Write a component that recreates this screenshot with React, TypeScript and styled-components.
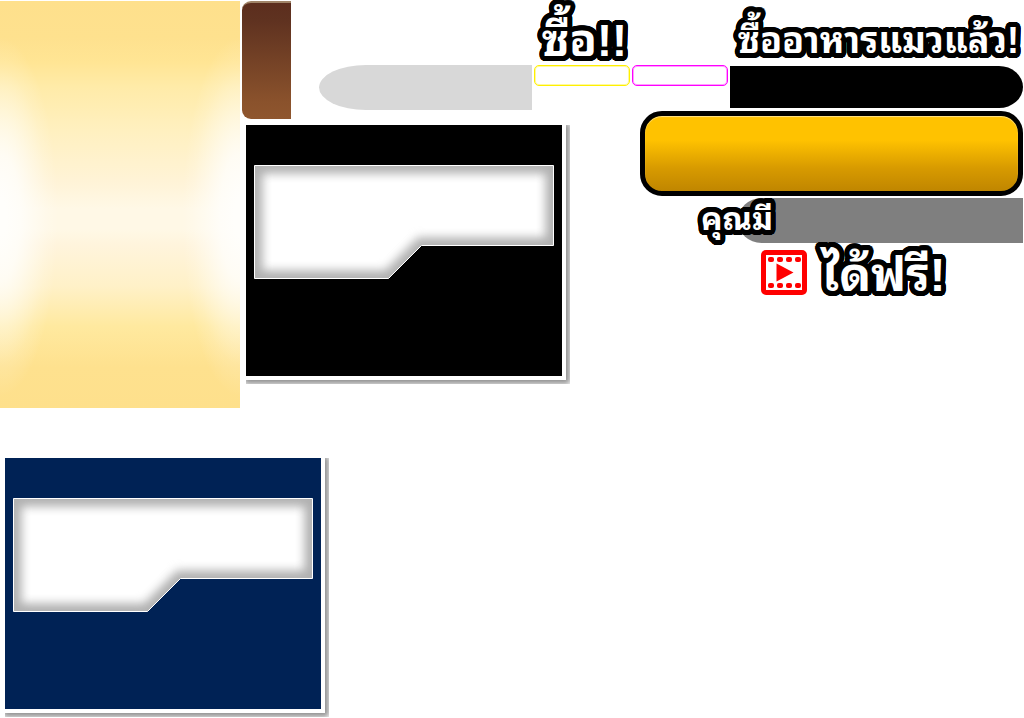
import React, { useId } from "react";
import styled, { createGlobalStyle } from "styled-components";

const GlobalStyle = createGlobalStyle`
  *, *::before, *::after { box-sizing: border-box; }
  body {
    margin: 0;
    background: #fff;
    font-family: "Liberation Sans", "Noto Sans Thai Looped", Loma, sans-serif;
    overflow-x: hidden;
  }
`;

const Page = styled.main`
  display: flex;
  flex-direction: column;
  gap: 50px;
  padding: 1px 1px 0 0;
`;

const Top = styled.div`
  display: flex;
  align-items: flex-start;
  gap: 2px;
`;

const GlowPanel = styled.aside`
  flex: none;
  width: 240px;
  height: 407px;
  background:
    radial-gradient(ellipse 58px 180px at 0 53%, #fffefb 10%, #fffefbd8 35%, #fffefb70 62%, #fffefb28 82%, #fffefb00 100%),
    radial-gradient(ellipse 58px 180px at 100% 53%, #fffefb 10%, #fffefbd8 35%, #fffefb70 62%, #fffefb28 82%, #fffefb00 100%),
    linear-gradient(#fee08c 0%, #fee18e 9%, #ffe594 15%, #ffeba8 21%, #fff0c0 32%,
      #fff3d6 44%, #fff8e6 51%, #fff8e6 56%, #fff4dc 60%, #fff1c8 70%,
      #ffe99f 80%, #fee18e 90%, #fee08c 100%);
`;

const Content = styled.div`
  flex: 1;
  min-width: 0;
  display: flex;
  flex-direction: column;
`;

const Header = styled.header`
  display: flex;
  justify-content: space-between;
  height: 110px;
`;

const BrownTab = styled.div`
  width: 49px;
  height: 118px;
  border-top: 2px solid #a08468;
  border-radius: 9px 0 0 9px;
  background: linear-gradient(#5c2e1e, #5f3220 15%, #8a522c 85%, #8f562e);
`;

const HeaderGroup = styled.div`
  display: flex;
  align-items: flex-end;
  gap: 2px;
`;

const GrayPill = styled.div`
  width: 213px;
  height: 45px;
  margin-bottom: 1px;
  border-radius: 48px 0 0 48px / 23px 0 0 23px;
  background: #d8d8d8;
`;

const Stack = styled.section<{ $width: number }>`
  display: flex;
  flex-direction: column;
  align-self: stretch;
  width: ${(p) => p.$width}px;
`;

const OUTLINE = Array.from({ length: 32 }, (_, i) => {
  const angle = (i * Math.PI) / 16;
  return `${(Math.cos(angle) * 5).toFixed(2)}px ${(Math.sin(angle) * 5).toFixed(2)}px 0 #000`;
}).join(", ");

const Outlined = styled.span<{ $size: number }>`
  display: block;
  color: #fff;
  font-size: ${(p) => p.$size}px;
  font-weight: 700;
  line-height: 64px;
  white-space: nowrap;
  text-shadow: ${OUTLINE}, 0 0 3px #000;
`;

const Title = styled(Outlined)`
  height: 64px;
  padding: 8px 8px 0;
`;

const FrameRow = styled.div`
  display: flex;
  gap: 2px;
`;

const Frame = styled.div<{ $color: string }>`
  width: 96px;
  height: 21px;
  border: 1px solid ${(p) => p.$color};
  border-radius: 5px;
  box-shadow: inset 0 0 0 1px ${(p) => p.$color}60;
`;

const BlackPill = styled.div`
  height: 42px;
  margin-top: 1px;
  border-radius: 0 24px 24px 0 / 0 21px 21px 0;
  background: #000;
`;

const Body = styled.div`
  display: flex;
  justify-content: space-between;
  align-items: flex-start;
  padding-left: 4px;
`;

const CardClip = styled.div`
  width: 324px;
  height: 259px;
  overflow: hidden;
`;

const CardSlot = styled.div`
  padding-top: 14px;
`;

const CardFace = styled.div<{ $color: string }>`
  width: 320px;
  height: 255px;
  padding: 40px 4px 0 8px;
  border: solid #fff;
  border-width: 0 4px 4px 0;
  background: ${(p) => p.$color};
  background-clip: padding-box;
  box-shadow: 1px 1px 6px 3px #00000070;

  svg { display: block; }
`;

const Side = styled.div`
  display: flex;
  flex-direction: column;
  width: 383px;
`;

const GoldButton = styled.button`
  width: 100%;
  height: 85px;
  border: 5px solid #000;
  border-radius: 22px;
  background: linear-gradient(#ffc200, #ffc200 32%, #d79a00 70%, #c08600);
  box-shadow: inset 0 1px 1px #ffe28a;
`;

const CountRow = styled.div`
  display: flex;
  align-items: center;
  height: 45px;
  margin: 2px 0 0 98px;
  border-radius: 24px 0 0 24px / 23px 0 0 23px;
  background: #7f7f7f;
`;

const CountLabel = styled(Outlined)`
  margin-left: -37px;
  padding-bottom: 4px;
`;

const FreeRow = styled.div`
  display: flex;
  align-items: center;
  gap: 15px;
  height: 58px;
  padding-left: 121px;

  svg { flex: none; }
`;

const FreeLabel = styled(Outlined)`
  padding-top: 6px;
`;

const Bottom = styled.div`
  padding-left: 5px;
`;

const NOTCH = "M.5 .5H299.5V80.5H167.5L134.5 113.5H.5Z";

function NotchedCard({ color }: { color: string }) {
  const id = useId();
  return (
    <CardClip>
      <CardFace $color={color}>
        <svg width="300" height="114" viewBox="0 0 300 114" aria-hidden="true">
          <defs>
            <clipPath id={`${id}c`}>
              <path d={NOTCH} />
            </clipPath>
            <filter
              id={`${id}b`}
              filterUnits="userSpaceOnUse"
              x="-30"
              y="-30"
              width="360"
              height="174"
              colorInterpolationFilters="sRGB"
            >
              <feGaussianBlur stdDeviation="5" />
            </filter>
          </defs>
          <g clipPath={`url(#${id}c)`}>
            <path d={NOTCH} fill="#fff" />
            <path d={NOTCH} fill="none" stroke="#b0b0b0" strokeWidth="16" filter={`url(#${id}b)`} />
          </g>
          <path d={NOTCH} fill="none" stroke="#fff" />
        </svg>
      </CardFace>
    </CardClip>
  );
}

function FilmIcon() {
  const holes = [7, 16, 25, 34];
  return (
    <svg width="46" height="45" viewBox="0 0 46 45" role="img" aria-label="video">
      <rect width="46" height="45" rx="5" fill="#f00" />
      <rect x="5" y="5" width="36" height="35" fill="#fff" />
      {[7, 33].map((y) =>
        holes.map((x) => (
          <rect key={`${x}-${y}`} x={x} y={y} width="6" height="5" rx="2" fill="#f00" />
        )),
      )}
      <path d="M15.500 13.500V31.500L32.500 22.500Z" fill="#f00" />
    </svg>
  );
}

export default function App() {
  return (
    <>
      <GlobalStyle />
      <Page>
        <Top>
          <GlowPanel />
          <Content>
            <Header>
              <BrownTab />
              <HeaderGroup>
                <GrayPill />
                <Stack $width={194}>
                  <Title $size={45}>ซื้อ!!</Title>
                  <FrameRow>
                    <Frame $color="#fff000" />
                    <Frame $color="#ff00ff" />
                  </FrameRow>
                </Stack>
                <Stack $width={293}>
                  <Title $size={36}>ซื้ออาหารแมวแล้ว!</Title>
                  <BlackPill />
                </Stack>
              </HeaderGroup>
            </Header>
            <Body>
              <CardSlot>
                <NotchedCard color="#000" />
              </CardSlot>
              <Side>
                <GoldButton type="button" aria-label="ซื้อ" />
                <CountRow>
                  <CountLabel $size={32}>คุณมี</CountLabel>
                </CountRow>
                <FreeRow>
                  <FilmIcon />
                  <FreeLabel $size={47}>ได้ฟรี!</FreeLabel>
                </FreeRow>
              </Side>
            </Body>
          </Content>
        </Top>
        <Bottom>
          <NotchedCard color="#002255" />
        </Bottom>
      </Page>
    </>
  );
}
